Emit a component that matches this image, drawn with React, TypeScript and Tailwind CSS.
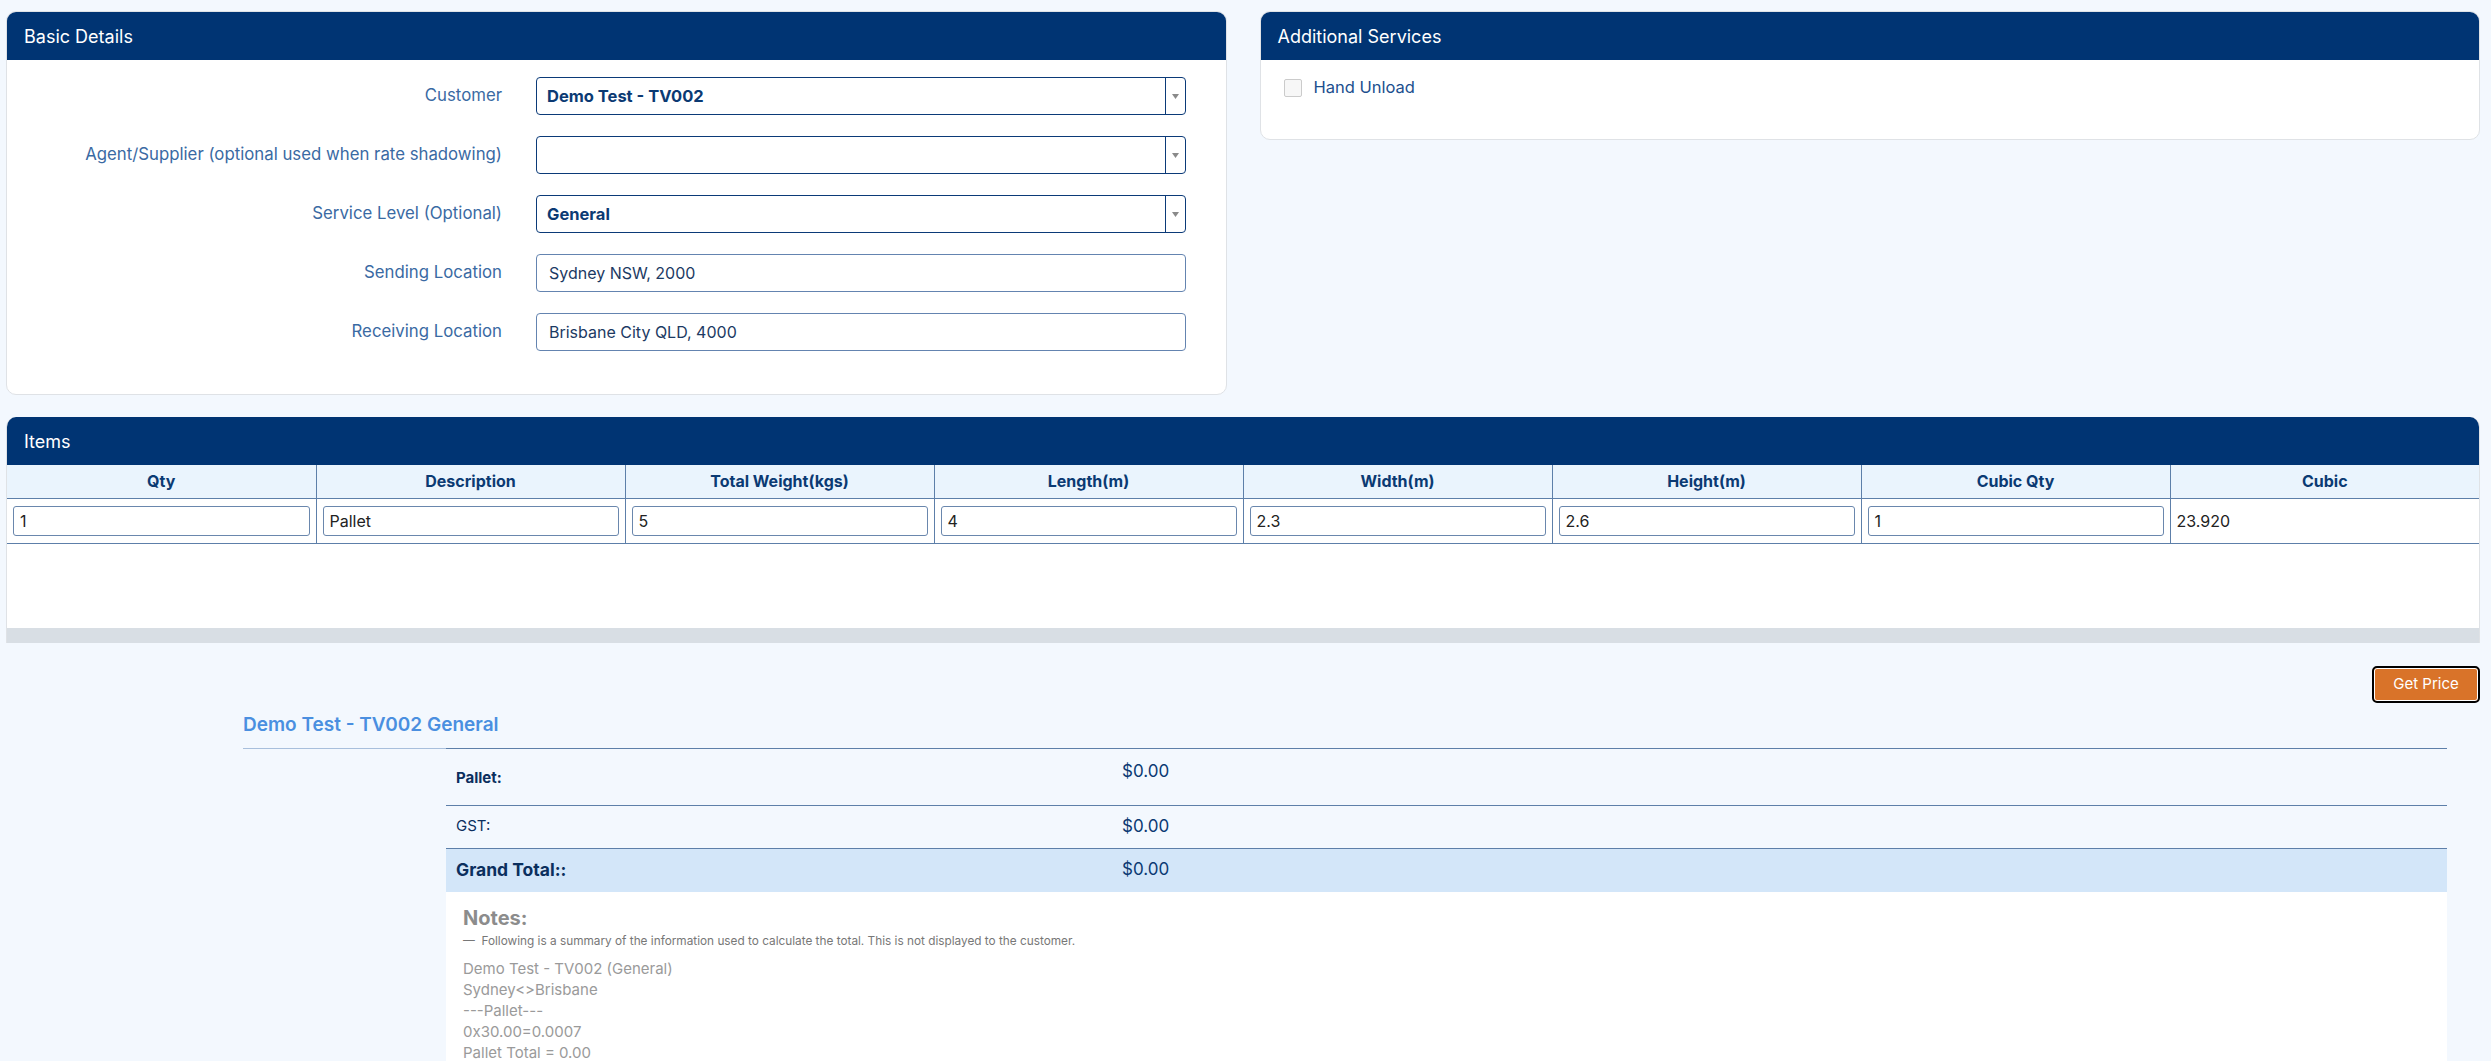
import React from 'react';

const fields = [
    { label: 'Customer', value: 'Demo Test - TV002', kind: 'select' },
    { label: 'Agent/Supplier (optional used when rate shadowing)', value: '', kind: 'select' },
    { label: 'Service Level (Optional)', value: 'General', kind: 'select' },
    { label: 'Sending Location', value: 'Sydney NSW, 2000', kind: 'input' },
    { label: 'Receiving Location', value: 'Brisbane City QLD, 4000', kind: 'input' },
];

const columns = ['Qty', 'Description', 'Total Weight(kgs)', 'Length(m)', 'Width(m)', 'Height(m)', 'Cubic Qty', 'Cubic'];
const row = ['1', 'Pallet', '5', '4', '2.3', '2.6', '1'];

const notes = ['Demo Test - TV002 (General)', 'Sydney<>Brisbane', '---Pallet---', '0x30.00=0.0007', 'Pallet Total = 0.00'];

function Panel({ title, children, className = '' }: { title: string; children: React.ReactNode; className?: string }) {
    return (
        <div className={`bg-white rounded-[10px] border border-[#dfe2e6] overflow-hidden ${className}`}>
            <div className="h-[48px] bg-[#003473] flex items-center pl-[17px] text-white text-[18px]">{title}</div>
            {children}
        </div>
    );
}

function FakeSelect({ value }: { value: string }) {
    return (
        <div className="h-[38px] w-[650px] flex rounded-[4px] border-[1.5px] border-[#0b3a78] bg-white">
            <div className="flex-1 flex items-center pl-[10px] text-[16.5px] font-bold text-[#0b3a73]">{value}</div>
            <div className="w-[20px] border-l-[1.5px] border-[#0b3a78] flex items-center justify-center">
                <svg width="7" height="5" viewBox="0 0 7 5"><path d="M0 0h7L3.5 5z" fill="#8a8a8a" /></svg>
            </div>
        </div>
    );
}

export default function App() {
    return (
        <div className="min-h-screen bg-[#f3f8fe] pl-[6px] pr-[11px] pt-[11px] font-['Inter',sans-serif]">
            <div className="grid grid-cols-2 gap-[33px] items-start">
                <Panel title="Basic Details">
                    <div className="pt-[17px] pb-[43px] space-y-[21px]">
                        {fields.map((f) => (
                            <div key={f.label} className="flex items-center">
                                <div className="w-[495px] text-right text-[16.8px] text-[#3a6aa3]">{f.label}</div>
                                <div className="ml-[34px]">
                                    {f.kind === 'select' ? (
                                        <FakeSelect value={f.value} />
                                    ) : (
                                        <div className="h-[38px] w-[650px] flex items-center pl-[12px] rounded-[4px] border border-[#6484b0] bg-white text-[16px] text-[#1c3a63]">{f.value}</div>
                                    )}
                                </div>
                            </div>
                        ))}
                    </div>
                </Panel>

                <Panel title="Additional Services">
                    <div className="h-[79px] pl-[23px] pt-[17px]">
                        <label className="flex items-start gap-[12px]">
                            <span className="mt-[2px] w-[18px] h-[18px] rounded-[2px] border border-[#cbcbcb] bg-[#f7f7f7]" />
                            <span className="text-[16.5px] leading-[20px] text-[#1c4f8e]">Hand Unload</span>
                        </label>
                    </div>
                </Panel>
            </div>

            <div className="mt-[22px] bg-white rounded-t-[10px] border-l border-r border-[#dfe2e6] overflow-hidden">
                <div className="h-[48px] bg-[#003473] flex items-center pl-[17px] text-white text-[18px]">Items</div>
                <table className="w-full table-fixed border-collapse">
                    <thead>
                        <tr className="h-[33px] bg-[#eaf4fd]">
                            {columns.map((c, i) => (
                                <th key={c} className={`text-center text-[16px] font-bold text-[#0b3a73] border-b border-[#5d7fa9] ${i < columns.length - 1 ? 'border-r' : ''}`}>{c}</th>
                            ))}
                        </tr>
                    </thead>
                    <tbody>
                        <tr className="h-[45px]">
                            {row.map((v, i) => (
                                <td key={i} className="px-[6px] border-r border-b border-[#5d7fa9]">
                                    <div className="h-[30px] flex items-center pl-[6px] rounded-[3px] border border-[#6a87ad] text-[16px] text-[#222]">{v}</div>
                                </td>
                            ))}
                            <td className="px-[6px] border-b border-[#5d7fa9] text-[16px] text-[#222]">23.920</td>
                        </tr>
                    </tbody>
                </table>
                <div className="h-[84px]" />
                <div className="h-[15px] bg-[#d8dee4]" />
            </div>

            <div className="flex justify-end mt-[23px]">
                <button className="h-[37px] w-[108px] rounded-[5px] bg-[#d97329] text-white text-[15px] border-2 border-black ring-1 ring-white ring-inset">Get Price</button>
            </div>

            <div className="ml-[237px] mr-[33px] mt-[8px]">
                <h2 className="text-[19px] leading-[28px] font-semibold text-[#4a8fe0] mb-[9px]">Demo Test - TV002 General</h2>
                <div className="flex">
                    <div className="w-[203px] border-t border-[#a8bfdc]" />
                    <div className="flex-1 border-t border-[#5d7fa9]">
                        <div className="flex h-[57px] border-b border-[#5d7fa9]">
                            <div className="w-[676px] pl-[10px] pt-[3px] flex items-center text-[15px] font-bold text-[#0b2f5e]">Pallet:</div>
                            <div className="pt-[10px] text-[17px] text-[#0b3a73]">$0.00</div>
                        </div>
                        <div className="flex h-[43px] items-center border-b border-[#5d7fa9]">
                            <div className="w-[676px] pl-[10px] text-[15px] text-[#0b2f5e]">GST:</div>
                            <div className="text-[17px] text-[#0b3a73]">$0.00</div>
                        </div>
                        <div className="flex h-[43px] items-center bg-[#d3e6f9]">
                            <div className="w-[676px] pl-[10px] text-[17.5px] font-bold text-[#0b2f5e]">Grand Total::</div>
                            <div className="text-[17px] text-[#0b3a73]">$0.00</div>
                        </div>
                        <div className="bg-white pl-[17px] pt-[13px] pb-[20px]">
                            <div className="text-[20px] font-bold text-[#8c8c8c] leading-[26px]">Notes:</div>
                            <div className="text-[11.8px] text-[#777] mt-[2px]">— &nbsp;Following is a summary of the information used to calculate the total. This is not displayed to the customer.</div>
                            <div className="mt-[8px] text-[15px] leading-[21px] text-[#9a9a9a]">
                                {notes.map((n) => (
                                    <div key={n}>{n}</div>
                                ))}
                            </div>
                        </div>
                    </div>
                </div>
            </div>
        </div>
    );
}
